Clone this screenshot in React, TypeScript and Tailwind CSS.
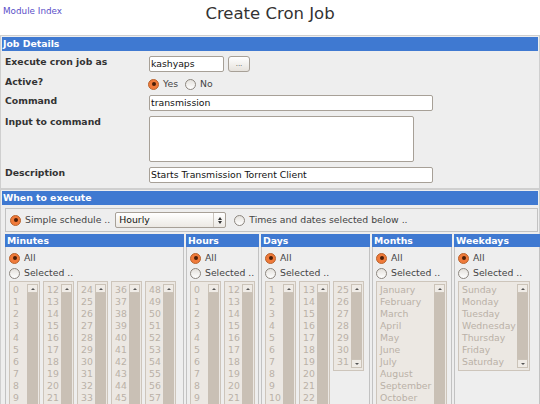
import React from "react";

const minutes = Array.from({ length: 60 }, (_, i) => String(i));
const hours = Array.from({ length: 24 }, (_, i) => String(i));
const days = Array.from({ length: 31 }, (_, i) => String(i + 1));
const months = [
  "January", "February", "March", "April", "May", "June",
  "July", "August", "September", "October", "November", "December",
];
const weekdays = ["Sunday", "Monday", "Tuesday", "Wednesday", "Thursday", "Friday", "Saturday"];

function chunk(list: string[], size: number) {
  const out: string[][] = [];
  for (let i = 0; i < list.length; i += size) out.push(list.slice(i, i + size));
  return out;
}

function Radio({ checked, label }: { checked?: boolean; label: string }) {
  return (
    <div className="flex items-center gap-[4px] text-[9.3px] text-[#444] h-[14px]">
      {checked ? (
        <span className="w-[11px] h-[11px] rounded-full border border-[#b8642f] bg-[#f07a3a] flex items-center justify-center">
          <span className="w-[4px] h-[4px] rounded-full bg-[#4a1e08]" />
        </span>
      ) : (
        <span className="w-[11px] h-[11px] rounded-full border border-[#8c867f] bg-gradient-to-b from-[#e4e1dc] to-white" />
      )}
      <span>{label}</span>
    </div>
  );
}

function Field({ w, h = 16, value }: { w: number; h?: number; value?: string }) {
  return (
    <div
      className="bg-white border border-[#a7a097] rounded-[2px] pl-[1px] text-[9.3px] leading-[14px] text-[#111]"
      style={{ width: w, height: h }}
    >
      {value}
    </div>
  );
}

function ListBox({ items, w, rows, down }: { items: string[]; w: number; rows: number; down?: boolean }) {
  return (
    <div
      className="relative border border-[#cdc5bb] bg-[#ece8e3] shrink-0 overflow-hidden"
      style={{ width: w, height: rows * 12 + 6 }}
    >
      <div className="pt-[2px] pl-[3px] text-[9.3px] leading-[12px] text-[#bab1a7]">
        {items.map((t) => (
          <div key={t}>{t}</div>
        ))}
      </div>
      <div className="absolute right-[1px] top-[2px] bottom-[2px] w-[11px] bg-[#c9c0b5] flex flex-col">
        <div className="h-[9px] bg-[#efebe6] border border-[#cbc3b8] flex items-center justify-center">
          <span className="w-0 h-0 border-l-[2px] border-r-[2px] border-b-[2px] border-l-transparent border-r-transparent border-b-[#555]" />
        </div>
        <div className="flex-1" />
        {down && (
          <div className="h-[9px] bg-[#efebe6] border border-[#cbc3b8] flex items-center justify-center">
            <span className="w-0 h-0 border-l-[2px] border-r-[2px] border-t-[2px] border-l-transparent border-r-transparent border-t-[#555]" />
          </div>
        )}
      </div>
    </div>
  );
}

function Column({ title, w, children }: { title: string; w: number; children: React.ReactNode }) {
  return (
    <div className="flex flex-col shrink-0" style={{ width: w }}>
      <div className="h-[13px] bg-[#3f79d1] text-white font-bold text-[9.3px] leading-[13px] pl-[2px]">{title}</div>
      <div className="flex-1 border-l border-r border-[#c2c2c2] pl-[3px] pt-[4px]">
        <Radio checked label="All" />
        <div className="mt-[1px]">
          <Radio label="Selected .." />
        </div>
        <div className="mt-[1px] flex gap-[3px] items-start">{children}</div>
      </div>
    </div>
  );
}

function Label({ children }: { children: React.ReactNode }) {
  return <div className="w-[147px] pl-[3px] font-bold text-[9.3px] leading-[12px] text-[#333] shrink-0">{children}</div>;
}

export default function App() {
  return (
    <div className="w-[540px] h-[404px] overflow-hidden bg-white font-['DejaVu_Sans',sans-serif]">
      <div className="h-[35px] grid grid-cols-[1fr_auto_1fr]">
        <div className="pl-[3px] pt-[5px] text-[8.8px] text-[#5b50c9]">Module Index</div>
        <div className="pt-[2px] text-[16.5px] text-[#333]">Create Cron Job</div>
        <div />
      </div>

      <div className="border border-[#cfcfcf] p-[1px] bg-[#eeeeee]">
        <div className="h-[14px] bg-[#3f79d1] text-white font-bold text-[9.3px] leading-[14px] pl-[1px]">Job Details</div>
        <div className="pt-[5px] pb-[4px]">
          <div className="flex items-start">
            <Label>Execute cron job as</Label>
            <Field w={75} value="kashyaps" />
            <div className="ml-[4px] w-[22px] h-[16px] rounded-[3px] border border-[#a7a097] bg-gradient-to-b from-white to-[#e6e2dc] text-[7px] text-[#555] flex items-center justify-center">
              ...
            </div>
          </div>
          <div className="flex items-start mt-[4px] h-[16px]">
            <Label>Active?</Label>
            <div className="flex items-center gap-[7px] pt-[1px] -ml-[1px]">
              <Radio checked label="Yes" />
              <Radio label="No" />
            </div>
          </div>
          <div className="flex items-start mt-[3px]">
            <Label>Command</Label>
            <Field w={284} value="transmission" />
          </div>
          <div className="flex items-start mt-[5px]">
            <Label>Input to command</Label>
            <Field w={265} h={46} />
          </div>
          <div className="flex items-start mt-[5px]">
            <Label>Description</Label>
            <Field w={284} value="Starts Transmission Torrent Client" />
          </div>
        </div>
      </div>

      <div className="border border-[#cfcfcf] p-[1px] bg-[#eeeeee] h-[260px]">
        <div className="h-[14px] bg-[#3f79d1] text-white font-bold text-[9.3px] leading-[14px] pl-[1px]">When to execute</div>
        <div className="ml-[3px] mt-[3px] h-[24px] border border-[#c2c2c2] flex items-center pl-[4px]">
          <Radio checked label="Simple schedule .." />
          <div className="ml-[5px] w-[111px] h-[16px] rounded-[2px] border border-[#a7a097] bg-gradient-to-b from-white to-[#ece9e4] flex items-center">
            <span className="flex-1 pl-[3px] text-[9.3px] text-[#111]">Hourly</span>
            <span className="w-[12px] h-full border-l border-[#cbc5bd] flex flex-col items-center justify-center gap-[1px]">
              <span className="w-0 h-0 border-l-[2px] border-r-[2px] border-b-[3px] border-l-transparent border-r-transparent border-b-[#333]" />
              <span className="w-0 h-0 border-l-[2px] border-r-[2px] border-t-[3px] border-l-transparent border-r-transparent border-t-[#333]" />
            </span>
          </div>
          <div className="ml-[8px]">
            <Radio label="Times and dates selected below .." />
          </div>
        </div>
        <div className="ml-[3px] mt-[2px] flex gap-[2px] h-[220px]">
          <Column title="Minutes" w={179}>
            {chunk(minutes, 12).map((c) => (
              <ListBox key={c[0]} items={c} w={31} rows={12} />
            ))}
          </Column>
          <Column title="Hours" w={73}>
            {chunk(hours, 12).map((c) => (
              <ListBox key={c[0]} items={c} w={31} rows={12} />
            ))}
          </Column>
          <Column title="Days" w={109}>
            <ListBox items={days.slice(0, 12)} w={31} rows={12} />
            <ListBox items={days.slice(12, 24)} w={31} rows={12} />
            <ListBox items={days.slice(24)} w={31} rows={7} down />
          </Column>
          <Column title="Months" w={80}>
            <ListBox items={months} w={71} rows={12} />
          </Column>
          <Column title="Weekdays" w={86}>
            <ListBox items={weekdays} w={72} rows={7} down />
          </Column>
        </div>
      </div>
    </div>
  );
}
